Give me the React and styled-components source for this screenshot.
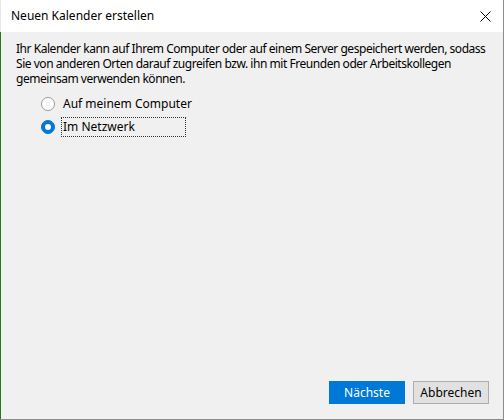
import React, { useState } from "react";
import styled, { createGlobalStyle } from "styled-components";

const Global = createGlobalStyle`
  html, body { margin: 0; padding: 0; background: #f0f0f0; }
  body { font-family: "Noto Sans", "Segoe UI", sans-serif; font-size: 12px; color: #000; }
  * { box-sizing: border-box; }
`;

const Window = styled.div`
  width: 504px;
  height: 420px;
  display: flex;
  flex-direction: column;
  border-right: 1px solid #8c8c8c;
  border-bottom: 1px solid #8c8c8c;
  background: #f0f0f0;
`;

const TitleBar = styled.div`
  height: 32px;
  flex: none;
  display: flex;
  align-items: center;
  justify-content: space-between;
  background: #fff;
  padding: 0 10px 0 10px;
  border-left: 1px solid #e6e6e6;
`;

const Title = styled.span`
  font-size: 12px;
  color: #000;
  margin-top: -1px;
`;

const CloseButton = styled.button`
  border: none;
  background: transparent;
  padding: 0;
  width: 14px;
  height: 14px;
  display: flex;
  align-items: center;
  justify-content: center;
  margin-right: 1px;
`;

const Body = styled.div`
  flex: 1;
  display: flex;
  flex-direction: column;
  padding: 9px 14px 14px 15px;
  border-left: 1px solid #1f7a1f;
`;

const Description = styled.p`
  margin: 0;
  line-height: 15px;
  font-size: 12px;
  letter-spacing: -0.46px;
  color: #000;
`;

const Options = styled.div`
  display: flex;
  flex-direction: column;
  gap: 3px;
  padding-left: 25px;
  margin-top: 8px;
`;

const OptionRow = styled.label`
  display: flex;
  align-items: center;
  gap: 7px;
  height: 20px;
  cursor: default;
`;

const RadioCircle = styled.span`
  width: 14px;
  height: 14px;
  border-radius: 50%;
  flex: none;
  display: flex;
  align-items: center;
  justify-content: center;
  background: ${(p) => (p.$checked ? "#0078d7" : "#fff")};
  border: 1px solid ${(p) => (p.$checked ? "#0078d7" : "#999")};
  &::after {
    content: "";
    display: ${(p) => (p.$checked ? "block" : "none")};
    width: 6px;
    height: 6px;
    border-radius: 50%;
    background: #fff;
  }
`;

const OptionText = styled.span`
  font-size: 12px;
  line-height: 18px;
  padding: 0 1px;
  margin-left: -1px;
  border: 1px dotted ${(p) => (p.$focused ? "#333" : "transparent")};
  width: ${(p) => (p.$focused ? "125px" : "auto")};
`;

const Spacer = styled.div`
  flex: 1;
`;

const ButtonRow = styled.div`
  display: flex;
  justify-content: flex-end;
  gap: 8px;
  margin-bottom: 1px;
`;

const Button = styled.button`
  width: 76px;
  height: 23px;
  font-family: inherit;
  font-size: 12px;
  padding: 0;
  background: ${(p) => (p.$primary ? "#0078d7" : "#e1e1e1")};
  color: ${(p) => (p.$primary ? "#fff" : "#000")};
  border: 1px solid ${(p) => (p.$primary ? "#0078d7" : "#adadad")};
  border-radius: 0;
`;

export default function App() {
  const [choice, setChoice] = useState("net");
  return (
    <>
      <Global />
      <Window>
        <TitleBar>
          <Title>Neuen Kalender erstellen</Title>
          <CloseButton aria-label="Schließen">
            <svg width="11" height="11" viewBox="0 0 11 11">
              <path d="M0.5 0.5 L10.5 10.5 M10.5 0.5 L0.5 10.5" stroke="#000" strokeWidth="1" fill="none" />
            </svg>
          </CloseButton>
        </TitleBar>
        <Body>
          <Description>
            Ihr Kalender kann auf Ihrem Computer oder auf einem Server gespeichert werden, sodass Sie von anderen Orten darauf zugreifen bzw. ihn mit Freunden oder Arbeitskollegen gemeinsam verwenden können.
          </Description>
          <Options>
            <OptionRow onClick={() => setChoice("local")}>
              <RadioCircle $checked={choice === "local"} />
              <OptionText $focused={choice === "local"}>Auf meinem Computer</OptionText>
            </OptionRow>
            <OptionRow onClick={() => setChoice("net")}>
              <RadioCircle $checked={choice === "net"} />
              <OptionText $focused={choice === "net"}>Im Netzwerk</OptionText>
            </OptionRow>
          </Options>
          <Spacer />
          <ButtonRow>
            <Button $primary>Nächste</Button>
            <Button>Abbrechen</Button>
          </ButtonRow>
        </Body>
      </Window>
    </>
  );
}
